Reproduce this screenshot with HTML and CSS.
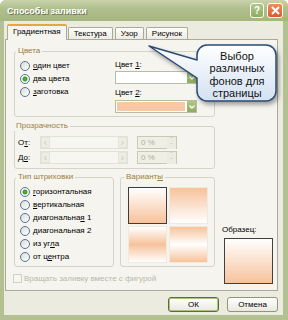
FILE: index.html
```html
<!DOCTYPE html>
<html lang="ru">
<head>
    <meta charset="UTF-8">
    <meta name="viewport" content="width=device-width, initial-scale=1.0">
    <title>Способы заливки</title>
    <link rel="stylesheet" href="styles.css">
</head>
<body>

    <div class="window">
        <div class="titlebar">
            <span class="title">Способы заливки</span>
            <span class="tbtn help">?</span>
            <span class="tbtn close">
                <svg width="9" height="9" viewBox="0 0 9 9"><path d="M1 1L8 8M8 1L1 8" stroke="#fff" stroke-width="2"/></svg>
            </span>
        </div>

        <div class="client">
            <div class="tabs">
                <div class="tab active">Градиентная</div>
                <div class="tab">Текстура</div>
                <div class="tab">Узор</div>
                <div class="tab">Рисунок</div>
            </div>

            <div class="panel">
                <div class="left">
                    <fieldset class="group colors">
                        <legend>Цвета</legend>
                        <div class="radios">
                            <div class="radio"><i></i><span><u>о</u>дин цвет</span></div>
                            <div class="radio"><i class="on"></i><span><u>д</u>ва цвета</span></div>
                            <div class="radio"><i></i><span><u>з</u>аготовка</span></div>
                        </div>
                        <div class="pickers">
                            <div class="pick-label">Цвет <u>1</u>:</div>
                            <div class="combo"><div class="combo-value"></div><div class="combo-btn"><svg width="6" height="4" viewBox="0 0 6 4"><path d="M0.5 0.5L3 3L5.5 0.5" stroke="#fff" stroke-width="1.4" fill="none"/></svg></div></div>
                            <div class="pick-label second">Цвет <u>2</u>:</div>
                            <div class="combo"><div class="combo-value peach"></div><div class="combo-btn"><svg width="6" height="4" viewBox="0 0 6 4"><path d="M0.5 0.5L3 3L5.5 0.5" stroke="#fff" stroke-width="1.4" fill="none"/></svg></div></div>
                        </div>
                    </fieldset>

                    <fieldset class="group transparency">
                        <legend>Прозрачность</legend>
                        <div class="trow">
                            <span class="tlabel">О<u>т</u>:</span>
                            <div class="track"><span class="arrow">&lsaquo;</span><span class="arrow">&rsaquo;</span></div>
                            <div class="spin"><span>0 %</span><div class="spin-btns"><i>&#710;</i><i>&#711;</i></div></div>
                        </div>
                        <div class="trow">
                            <span class="tlabel">Д<u>о</u>:</span>
                            <div class="track"><span class="arrow">&lsaquo;</span><span class="arrow">&rsaquo;</span></div>
                            <div class="spin"><span>0 %</span><div class="spin-btns"><i>&#710;</i><i>&#711;</i></div></div>
                        </div>
                    </fieldset>

                    <div class="row3">
                        <fieldset class="group shading">
                            <legend>Тип штриховки</legend>
                            <div class="radio"><i class="on"></i><span><u>г</u>оризонтальная</span></div>
                            <div class="radio"><i></i><span><u>в</u>ертикальная</span></div>
                            <div class="radio"><i></i><span>диагональна<u>я</u> 1</span></div>
                            <div class="radio"><i></i><span>диагональная 2</span></div>
                            <div class="radio"><i></i><span>из уг<u>л</u>а</span></div>
                            <div class="radio"><i></i><span>от ц<u>е</u>нтра</span></div>
                        </fieldset>

                        <fieldset class="group variants">
                            <legend>Вариант<u>ы</u></legend>
                            <div class="swatches">
                                <div class="swatch down selected"></div>
                                <div class="swatch up"></div>
                                <div class="swatch mid"></div>
                                <div class="swatch edge"></div>
                            </div>
                        </fieldset>
                    </div>

                    <div class="check">
                        <i></i><span>Вращать заливку вместе с фигурой</span>
                    </div>
                </div>

                <div class="right">
                    <div class="sample-label">Образец:</div>
                    <div class="sample"></div>
                </div>
            </div>

            <div class="buttons">
                <button type="button" class="btn btn-default">ОК</button>
                <button type="button" class="btn">Отмена</button>
            </div>
        </div>

        <div class="callout">
            <svg width="140" height="70" viewBox="0 0 140 70">
                <defs>
                    <linearGradient id="cg" x1="0" y1="0" x2="0" y2="1">
                        <stop offset="0" stop-color="#ffffff"/>
                        <stop offset="1" stop-color="#d3e1f2"/>
                    </linearGradient>
                </defs>
                <path d="M61 3H120A10 10 0 0 1 130 13V49A10 10 0 0 1 120 59H61A10 10 0 0 1 51 49V36L3 4L51 18V13A10 10 0 0 1 61 3Z"
                      fill="url(#cg)" stroke="#2b4b76" stroke-width="1.5" stroke-linejoin="round"/>
            </svg>
            <div class="callout-text">Выбор<br>различных<br>фонов для<br>страницы</div>
        </div>
    </div>

</body>
</html>
```

FILE: styles.css
```css
* {
    box-sizing: border-box;
}
body {
    margin: 0;
    font-family: "Liberation Sans", Arial, sans-serif;
    font-size: 8px;
    color: #000;
    background: #fff;
}
u {
    text-decoration: underline;
}
.window {
    position: relative;
    width: 288px;
    height: 320px;
    display: flex;
    flex-direction: column;
    background: #b3c192;
    border-radius: 6px 6px 0 0;
}
.titlebar {
    height: 21px;
    display: flex;
    align-items: center;
    padding: 0 5px 0 7px;
    border-radius: 6px 6px 0 0;
    background: linear-gradient(#cad4ac, #b0bf8c 40%, #a6b680);
}
.title {
    flex: 1;
    color: #fff;
    font-size: 9px;
    font-weight: bold;
    text-shadow: 1px 1px 0 #6b7650;
}
.tbtn {
    display: flex;
    align-items: center;
    justify-content: center;
    height: 15px;
    border: 1px solid #fff;
    border-radius: 3px;
    color: #fff;
    font-weight: bold;
    font-size: 10px;
}
.help {
    width: 14px;
    margin-right: 3px;
    background: linear-gradient(#b0c88a, #8fad5e);
}
.close {
    width: 16px;
    background: linear-gradient(#ee8d62, #d9582f);
}
.client {
    flex: 1;
    margin: 0 5px 5px 4px;
    padding: 3px 5px 0 1px;
    background: #ecebdf;
}
.tabs {
    display: flex;
    align-items: flex-end;
    height: 15px;
    padding-left: 2px;
}
.tab {
    height: 12px;
    padding: 0 5px;
    margin-right: 2px;
    border: 1px solid #a9ab98;
    border-bottom: none;
    border-radius: 2px 2px 0 0;
    background: linear-gradient(#fdfdfb, #ecebe3);
    line-height: 11px;
}
.tab.active {
    position: relative;
    z-index: 1;
    height: 16px;
    margin-bottom: -1px;
    margin-right: 1px;
    border-top: 2px solid #e8a63e;
    background: #f5f4ee;
    line-height: 12px;
}
.panel {
    height: 252px;
    display: flex;
    padding: 6px 4px 6px 8px;
    border: 1px solid #a9ab98;
    background: #f5f4ee;
}
.left {
    width: 201px;
    display: flex;
    flex-direction: column;
}
.right {
    width: 50px;
    margin-left: 7px;
    display: flex;
    flex-direction: column;
    justify-content: flex-end;
}
.group {
    margin: 0;
    min-width: 0;
    border: 1px solid #d6d4c6;
    border-radius: 3px;
}
.group legend {
    padding: 0 2px;
    margin-left: -4px;
    line-height: 10px;
    color: #9c7e3c;
}
.colors {
    display: flex;
    align-items: flex-start;
    padding: 3px 4px 3px 5px;
}
.radios {
    width: 95px;
}
.radio {
    display: flex;
    align-items: center;
    height: 13px;
}
.radio i {
    width: 10px;
    height: 10px;
    margin-right: 3px;
    border: 1px solid #55759a;
    border-radius: 50%;
    background: linear-gradient(135deg, #dcdcd2, #ffffff);
}
.radio i.on {
    background: radial-gradient(circle, #55b63a 0, #3f9a2a 2px, #ffffff 3px, #e8e8e0 5px);
}
.pickers {
    width: 82px;
}
.pick-label {
    height: 12px;
    line-height: 12px;
}
.pick-label.second {
    margin-top: 3px;
}
.combo {
    display: flex;
    height: 13px;
    border: 1px solid #b7bda3;
    background: #fff;
}
.combo + .pick-label {
    margin-top: 3px;
}
.pick-label.second + .combo {
    margin-top: 1px;
}
.combo-value {
    flex: 1;
    margin: 1px;
}
.combo-value.peach {
    background: #f8c8a4;
}
.combo-btn {
    width: 10px;
    display: flex;
    align-items: center;
    justify-content: center;
    background: linear-gradient(#afc786, #8eab5f);
    border-left: 1px solid #fff;
}
.transparency {
    margin-top: 4px;
    padding: 4px 4px 4px 3px;
}
.trow {
    display: flex;
    align-items: center;
    height: 14px;
}
.trow + .trow {
    margin-top: 1px;
}
.tlabel {
    width: 22px;
}
.track {
    width: 88px;
    height: 13px;
    display: flex;
    justify-content: space-between;
    border: 1px solid #e2e1d6;
    background: #f7f7f1;
}
.arrow {
    width: 9px;
    height: 11px;
    border: 1px solid #e4e3d8;
    background: #eeeee6;
    color: #c8c8bc;
    font-size: 10px;
    line-height: 9px;
    text-align: center;
}
.spin {
    width: 40px;
    height: 13px;
    margin-left: 9px;
    display: flex;
    justify-content: space-between;
    border: 1px solid #c9cab6;
    background: #efefe6;
    color: #aeae9f;
    padding-left: 3px;
    line-height: 11px;
}
.spin-btns {
    width: 9px;
    display: flex;
    flex-direction: column;
}
.spin-btns i {
    flex: 1;
    font-style: normal;
    font-size: 7px;
    line-height: 6px;
    text-align: center;
    color: #c0c0b2;
    background: #ecece3;
}
.row3 {
    display: flex;
    margin-top: 3px;
}
.shading {
    width: 100px;
    padding: 3px 2px 3px 5px;
}
.variants {
    width: 95px;
    margin-left: 6px;
    padding: 5px 3px 3px 7px;
}
.swatches {
    display: grid;
    grid-template-columns: 39px 39px;
    grid-template-rows: 37px 37px;
    gap: 2px;
}
.swatch {
    border: 1px solid #efe9de;
}
.swatch.selected {
    border-color: #3c3c3c;
}
.down {
    background: linear-gradient(#ffffff, #f7c29b);
}
.up {
    background: linear-gradient(#f7c29b, #ffffff);
}
.mid {
    background: linear-gradient(#ffffff, #f7c29b 50%, #ffffff);
}
.edge {
    background: linear-gradient(#f7c29b, #ffffff 50%, #f7c29b);
}
.check {
    display: flex;
    align-items: center;
    height: 9px;
    margin-top: 7px;
    margin-left: -1px;
    color: #b9b8ab;
}
.check i {
    width: 9px;
    height: 9px;
    margin-right: 2px;
    border: 1px solid #d2d1c4;
    background: #f7f7f1;
}
.sample-label {
    height: 10px;
    line-height: 10px;
    margin-bottom: 3px;
}
.sample {
    width: 49px;
    height: 46px;
    margin-left: 2px;
    border: 1px solid #404040;
    background: linear-gradient(#ffffff, #f7c29b);
}
.buttons {
    display: flex;
    justify-content: flex-end;
    gap: 8px;
    margin-top: 6px;
    padding-right: 0;
}
.btn {
    width: 51px;
    height: 15px;
    padding: 0;
    border: 1px solid #8e9878;
    border-radius: 3px;
    background: linear-gradient(#ffffff, #e9e8df);
    font-family: "Liberation Sans", Arial, sans-serif;
    font-size: 8px;
    color: #000;
}
.btn-default {
    border-color: #5e6c3b;
    box-shadow: inset 0 0 0 1px #a9c47c;
}
.callout {
    position: absolute;
    left: 146px;
    top: 42px;
    width: 140px;
    height: 70px;
}
.callout svg {
    display: block;
    filter: drop-shadow(2px 3px 2px rgba(0, 0, 0, 0.35));
}
.callout-text {
    position: absolute;
    left: 51px;
    top: 8px;
    width: 80px;
    text-align: center;
    font-size: 11px;
    line-height: 12.3px;
    color: #111;
}
```
